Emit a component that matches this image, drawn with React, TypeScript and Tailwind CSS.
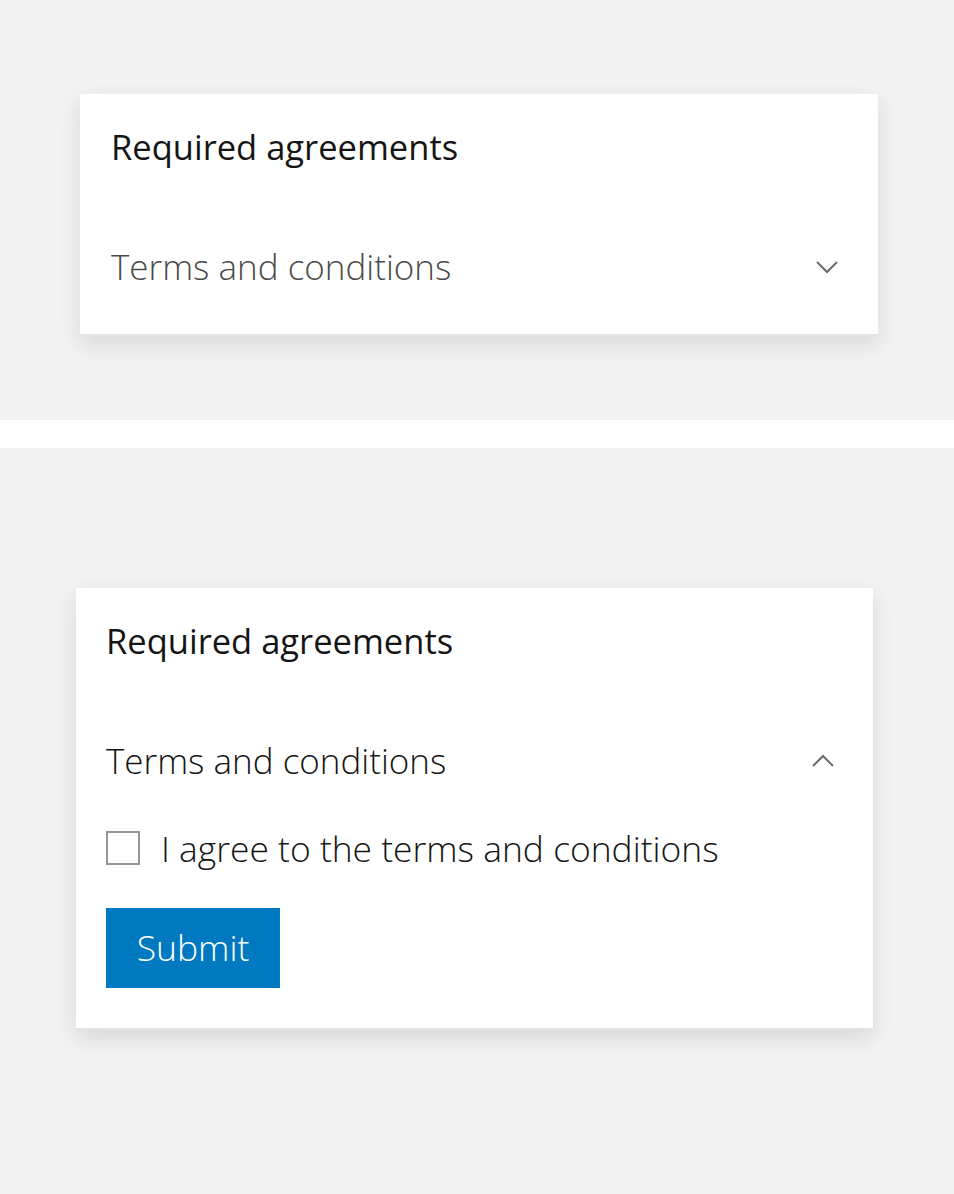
import { useState } from 'react'

const font = { fontFamily: '"Open Sans", "Noto Sans", sans-serif' }

function Chevron({ up }: { up?: boolean }) {
  return (
    <svg width="22" height="14" viewBox="0 0 22 14" fill="none" className="shrink-0">
      <path
        d={up ? 'M1 12L11 2L21 12' : 'M1 2L11 12L21 2'}
        stroke="#6b6b6b"
        strokeWidth="2"
      />
    </svg>
  )
}

function Card({ open, className }: { open: boolean; className: string }) {
  const [checked, setChecked] = useState(false)
  return (
    <div className={`bg-white shadow-[0_8px_22px_rgba(0,0,0,0.11)] border-b-2 border-[#e4e4e4] ${className}`}>
      <div className="pt-[36px] pb-[36px]">
        <h2 className="text-[34.5px] leading-[34px] font-normal text-[#151515]">Required agreements</h2>
      </div>
      <div className={open ? 'pt-[50px] pb-[40px]' : 'pt-[50px] pb-[50px]'}>
        <button className="w-full flex items-center justify-between text-left">
          <span className={`text-[35px] leading-[34px] font-light ${open ? 'text-[#151515]' : 'text-[#4a4a4a]'}`}>
            Terms and conditions
          </span>
          <Chevron up={open} />
        </button>
        {open && (
          <div className="mt-[53px]">
            <label className="flex items-center gap-[21px] cursor-pointer">
              <span
                onClick={() => setChecked(!checked)}
                className="w-[34px] h-[34px] border-2 border-[#959595] bg-white shrink-0"
              />
              <span className="text-[35.4px] leading-[34px] font-light text-[#151515]">
                I agree to the terms and conditions
              </span>
            </label>
            <button className="mt-[43px] w-[174px] h-[80px] bg-[#0079c1] text-white text-[35.5px] font-light">
              Submit
            </button>
          </div>
        )}
      </div>
    </div>
  )
}

export default function App() {
  return (
    <div style={font} className="w-[954px] min-h-[1194px] bg-white">
      <div className="h-[420px] bg-[#f2f2f2] pt-[94px]">
        <Card open={false} className="ml-[80px] w-[798px] pl-[31px] pr-[40px]" />
      </div>
      <div className="h-[28px] bg-white" />
      <div className="h-[746px] bg-[#f2f2f2] pt-[140px]">
        <Card open className="ml-[76px] w-[797px] pl-[30px] pr-[39px]" />
      </div>
    </div>
  )
}
